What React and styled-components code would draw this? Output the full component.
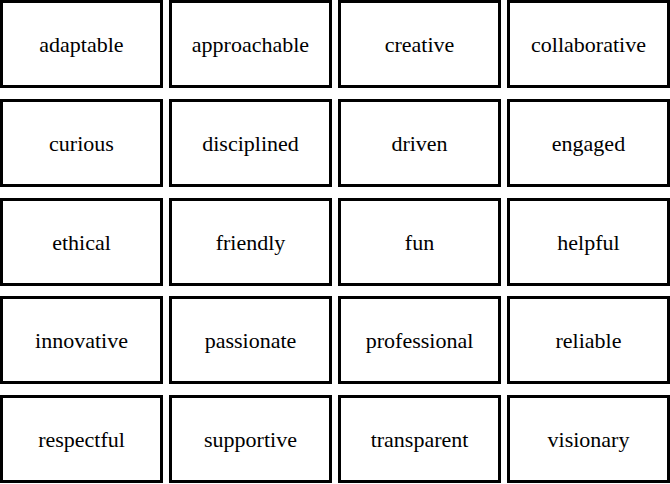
import React from 'react'
import styled, { createGlobalStyle } from 'styled-components'

const Global = createGlobalStyle`
  html, body {
    margin: 0;
    padding: 0;
    background: #fff;
  }
`

const Grid = styled.div`
  display: grid;
  grid-template-columns: repeat(4, 163px);
  grid-auto-rows: 88px;
  column-gap: 6px;
  row-gap: 10.75px;
  width: 670px;
`

const Card = styled.div`
  display: flex;
  align-items: center;
  justify-content: center;
  box-sizing: border-box;
  padding-top: 2px;
  border: 3px solid #000;
  background: #fff;
  font-family: "Liberation Serif", serif;
  font-size: 22px;
  color: #000;
`

const words = [
  'adaptable', 'approachable', 'creative', 'collaborative',
  'curious', 'disciplined', 'driven', 'engaged',
  'ethical', 'friendly', 'fun', 'helpful',
  'innovative', 'passionate', 'professional', 'reliable',
  'respectful', 'supportive', 'transparent', 'visionary'
]

const App = () =>
  <>
    <Global />
    <Grid>
      {words.map(w => <Card key={w}>{w}</Card>)}
    </Grid>
  </>

export default App
